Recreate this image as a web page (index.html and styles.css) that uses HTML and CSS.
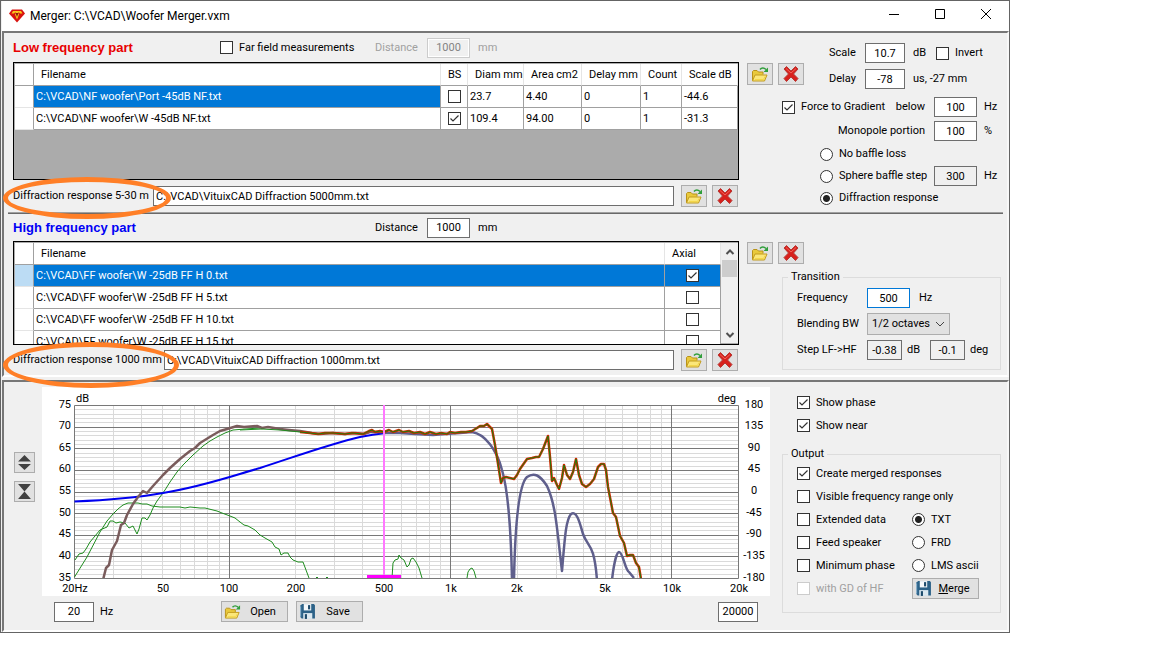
FILE: index.html
```
<!DOCTYPE html>
<html lang="en">
<head>
    <meta charset="UTF-8">
    <meta name="viewport" content="width=device-width, initial-scale=1.0">
    <title>Merger: C:\VCAD\Woofer Merger.vxm</title>
    <link rel="stylesheet" href="styles.css">
</head>
<body>
    <svg class="sprite" aria-hidden="true">
        <symbol id="icon-folder" viewBox="0 0 18 18">
            <path d="M1.500 15.500V6.500l1-1H6L7.500 7H12v2.500" fill="#e9c93c" stroke="#b8921a"/>
            <path d="M1.500 16l2.500-6h12l-2.500 6z" fill="#fbe77a" stroke="#c39c1e"/>
            <path d="M4 14.500h8.500l1.500-3" fill="none" stroke="#f3d64a"/>
            <path d="M9 4.500c1.500-2 4-2 6 0" fill="none" stroke="#2f9e3a" stroke-width="1.500"/>
            <path d="M17 2.500v4.500h-4.500z" fill="#2f9e3a"/>
        </symbol>
        <symbol id="icon-delete" viewBox="0 0 18 18">
            <path d="M4.500 1.500L9 6l4.500-4.500 2.500 2.500-4.500 5 4.500 4.500-2.500 3L9 12l-4.500 4.500L2 13.500 6.500 9 2 4z" fill="#d8201c" stroke="#b53a35"/>
            <path d="M4 3.500l5 4.500 5-4.500" fill="none" stroke="#f0655a"/>
        </symbol>
        <symbol id="icon-save" viewBox="0 0 16 16">
            <path d="M1 2.500L3 1h11l1 1v12.500H2.500L1 13z" fill="#2c6288"/>
            <path d="M4.500 1h7v6h-7z" fill="#f4f8fb"/>
            <path d="M8.500 2h2v4h-2z" fill="#1c4a6b"/>
            <path d="M4 9.500h8.500V15H4z" fill="#dbe8f0"/>
            <path d="M5.500 10.500h2V15h-2z" fill="#1c4a6b"/>
            <path d="M1.500 3v10" stroke="#8db4cd"/>
        </symbol>
    </svg>

    <div class="window">
        <header class="titlebar">
            <svg class="logo" viewBox="0 0 16 14" aria-hidden="true">
                <path d="M3 0.500h10l3 4-8 9-8-9z" fill="#d8130f"/>
                <path d="M4 2h8l1.500 2.500h-2.500l-1-1H9l1 2-2 5-2-5 1-2H6l-1 1H2.500z" fill="#f7c81c"/>
                <path d="M6.500 4h3L8 8z" fill="#8c1010"/>
            </svg>
            <h1>Merger: C:\VCAD\Woofer Merger.vxm</h1>
            <div class="caption-buttons">
                <button aria-label="Minimize"><svg viewBox="0 0 12 12"><path d="M1 6.500h10"/></svg></button>
                <button aria-label="Maximize"><svg viewBox="0 0 12 12"><path d="M1.500 1.500h9v9h-9z"/></svg></button>
                <button aria-label="Close"><svg viewBox="0 0 12 12"><path d="M1 1l10 10M11 1L1 11"/></svg></button>
            </div>
        </header>

        <main>
            <div class="panel">
                <section class="part low">
                    <div class="part-main">
                        <div class="part-head">
                            <h2 class="red">Low frequency part</h2>
                            <label class="check far-field"><input type="checkbox"> Far field measurements</label>
                            <label class="distance disabled" for="lf-distance">Distance</label>
                            <input id="lf-distance" class="field" type="text" value="1000" disabled>
                            <span class="disabled">mm</span>
                        </div>
                        <div class="grid-frame">
                            <table class="files">
                                <colgroup>
                                    <col class="c-mark"><col><col class="c-bs"><col class="c-diam"><col class="c-area"><col class="c-delay"><col class="c-count"><col class="c-scale">
                                </colgroup>
                                <thead>
                                    <tr><th></th><th>Filename</th><th>BS</th><th>Diam mm</th><th>Area cm2</th><th>Delay mm</th><th>Count</th><th>Scale dB</th></tr>
                                </thead>
                                <tbody>
                                    <tr>
                                        <td></td><td class="selected">C:\VCAD\NF woofer\Port -45dB NF.txt</td>
                                        <td class="tick"><input type="checkbox" aria-label="BS, port"></td>
                                        <td>23.7</td><td>4.40</td><td>0</td><td>1</td><td>-44.6</td>
                                    </tr>
                                    <tr>
                                        <td></td><td>C:\VCAD\NF woofer\W -45dB NF.txt</td>
                                        <td class="tick"><input type="checkbox" aria-label="BS, woofer" checked></td>
                                        <td>109.4</td><td>94.00</td><td>0</td><td>1</td><td>-31.3</td>
                                    </tr>
                                </tbody>
                            </table>
                        </div>
                        <div class="diffraction">
                            <label for="lf-diffraction">Diffraction response 5-30 m</label>
                            <input id="lf-diffraction" class="path" type="text" value="C:\VCAD\VituixCAD Diffraction 5000mm.txt">
                            <button class="tool" aria-label="Open"><svg><use href="#icon-folder"/></svg></button>
                            <button class="tool" aria-label="Remove"><svg><use href="#icon-delete"/></svg></button>
                            <span class="ring"></span>
                        </div>
                    </div>

                    <div class="side">
                        <div class="side-head">
                            <div class="tools">
                                <button class="tool" aria-label="Add file"><svg><use href="#icon-folder"/></svg></button>
                                <button class="tool" aria-label="Delete file"><svg><use href="#icon-delete"/></svg></button>
                            </div>
                            <div class="scale-rows">
                                <label for="scale">Scale</label>
                                <input id="scale" class="field small" type="text" value="10.7">
                                <div class="after"><span class="db">dB</span><label class="check"><input type="checkbox"> Invert</label></div>
                                <label for="delay">Delay</label>
                                <input id="delay" class="field small" type="text" value="-78">
                                <div class="after">us, -27 mm</div>
                            </div>
                        </div>
                        <div class="side-row">
                            <label class="check grow"><input type="checkbox" checked> Force to Gradient</label>
                            <label for="gradient">below</label>
                            <input id="gradient" class="field" type="text" value="100">
                            <span class="unit">Hz</span>
                        </div>
                        <div class="side-row">
                            <label for="monopole">Monopole portion</label>
                            <input id="monopole" class="field" type="text" value="100">
                            <span class="unit">%</span>
                        </div>
                        <div class="radios">
                            <label class="check"><input type="radio" name="baffle"> No baffle loss</label>
                            <div class="radio-row">
                                <label class="check"><input type="radio" name="baffle"> Sphere baffle step</label>
                                <input class="field" type="text" value="300" readonly aria-label="Baffle step frequency">
                                <span class="unit">Hz</span>
                            </div>
                            <label class="check"><input type="radio" name="baffle" checked> Diffraction response</label>
                        </div>
                    </div>
                </section>

                <hr class="splitter">

                <section class="part high">
                    <div class="part-main">
                        <div class="part-head">
                            <h2 class="blue">High frequency part</h2>
                            <label class="distance" for="hf-distance">Distance</label>
                            <input id="hf-distance" class="field" type="text" value="1000">
                            <span>mm</span>
                        </div>
                        <div class="grid-frame">
                            <table class="files">
                                <colgroup><col class="c-mark"><col><col class="c-axial"></colgroup>
                                <thead>
                                    <tr><th></th><th>Filename</th><th>Axial</th></tr>
                                </thead>
                                <tbody>
                                    <tr class="current">
                                        <td></td><td class="selected">C:\VCAD\FF woofer\W -25dB FF H 0.txt</td>
                                        <td class="tick selected"><input type="checkbox" aria-label="Axial, 0" checked></td>
                                    </tr>
                                    <tr>
                                        <td></td><td>C:\VCAD\FF woofer\W -25dB FF H 5.txt</td>
                                        <td class="tick"><input type="checkbox" aria-label="Axial, 5"></td>
                                    </tr>
                                    <tr>
                                        <td></td><td>C:\VCAD\FF woofer\W -25dB FF H 10.txt</td>
                                        <td class="tick"><input type="checkbox" aria-label="Axial, 10"></td>
                                    </tr>
                                    <tr>
                                        <td></td><td>C:\VCAD\FF woofer\W -25dB FF H 15.txt</td>
                                        <td class="tick"><input type="checkbox" aria-label="Axial, 15"></td>
                                    </tr>
                                </tbody>
                            </table>
                            <div class="scrollbar">
                                <button aria-label="Scroll up"><svg viewBox="0 0 10 6"><path d="M1.500 5L5 1.500 8.500 5"/></svg></button>
                                <div class="thumb"></div>
                                <button aria-label="Scroll down"><svg viewBox="0 0 10 6"><path d="M1.500 1L5 4.500 8.500 1"/></svg></button>
                            </div>
                        </div>
                        <div class="diffraction">
                            <label for="hf-diffraction">Diffraction response 1000 mm</label>
                            <input id="hf-diffraction" class="path" type="text" value="C:\VCAD\VituixCAD Diffraction 1000mm.txt">
                            <button class="tool" aria-label="Open"><svg><use href="#icon-folder"/></svg></button>
                            <button class="tool" aria-label="Remove"><svg><use href="#icon-delete"/></svg></button>
                            <span class="ring"></span>
                        </div>
                    </div>

                    <div class="side">
                        <div class="tools">
                            <button class="tool" aria-label="Add file"><svg><use href="#icon-folder"/></svg></button>
                            <button class="tool" aria-label="Delete file"><svg><use href="#icon-delete"/></svg></button>
                        </div>
                        <fieldset class="transition">
                            <legend>Transition</legend>
                            <label for="frequency">Frequency</label>
                            <div class="values"><input id="frequency" class="field active" type="text" value="500"><span class="hz">Hz</span></div>
                            <label for="blending">Blending BW</label>
                            <div class="values"><select id="blending"><option>1/2 octaves</option></select></div>
                            <label for="step-db">Step LF-&gt;HF</label>
                            <div class="values">
                                <input id="step-db" class="field tiny" type="text" value="-0.38" readonly><span>dB</span>
                                <input class="field tiny step-deg" type="text" value="-0.1" readonly aria-label="Step in degrees"><span>deg</span>
                            </div>
                        </fieldset>
                    </div>
                </section>
            </div>

            <div class="panel bottom">
                <div class="zoom-buttons">
                    <button aria-label="Expand scale"><svg viewBox="0 0 14 14"><path d="M7 0l6 6H1zM7 14l6-5.500H1z"/></svg></button>
                    <button aria-label="Compress scale"><svg viewBox="0 0 14 14"><path d="M1 0h12L7 7zM1 14h12L7 7z"/></svg></button>
                </div>

                <div class="chart-column">
                    <svg id="chart" class="chart" viewBox="42 387 728 209" role="img" aria-label="Frequency response">
                        <defs><clipPath id="plot"><rect x="74" y="405" width="665" height="173"/></clipPath></defs>
                        <g id="chart-grid"></g>
                        <g clip-path="url(#plot)" class="curves">
                            <path class="near" d="M74.500 577L87 557 100 532 107 521 113 514 118 509 123 505 128 503 133 503 138 503 142 504 147 504 152 506 160 507 170 507 180 507 185 508 190 507 200 508 205 508 213 510 217 511 222 513 230 516 235 518 240 522 244 525 248 526 255 530 258 533 260 535 265 538 272 542 275 547 279 549 281 555 284 553 288 553 290 557 293 560 298 562 303 562 306 570 309 578M316 578l1-1 1 1M326 578l1-1 1 1"/>
                            <path class="near" d="M75 560L79 554 83 553 86 549 90 542 95 536 100 530 107 527 110 521 113 521 116 523 120 522 125 523 129 528 133 526 137 534 139 529 142 518 145 518 147 520 150 515 153 508 157 501 160 497 165 490 170 482 177 472 183 465 193 455 203 446 210 441 217 437 225 433 233 430 245 429 260 428"/>
                            <path class="near" d="M392 578l1-15 2-3 3-1 1-4 2 3 3 2 3 7 2-2 2-6 2-1 3 4 3 6 3 10M467 578l1-6 2-3 2-1 2 3 2 7"/>
                            <path class="blue-line" d="M74.500 501.500C110 500 140 497 163 493C205 486 235 475 260 468C300 455 330 444 360 437C370 435 377 434 386 433"/>
                            <path class="slate" d="M383 433L400 433 415 434 433 435 445 434 460 433 472 432C485 434 497 450 502 470C508 490 511 530 512 580H514C515 530 518 485 527 477C534 472 540 475 547 486C556 505 557 530 562 571C565 535 566 520 571 514C577 510 580 524 583 534C588 548 594 542 597 580M612 580C614 562 617 552 619 552C623 552 625 570 629 572L634 578"/>
                            <path class="lf" d="M103 580L106 568 109 565 112 550 117 541 121 525 124 523 127 515 133 504 138 497 143 491 147 493 153 486 163 475 170 468 180 459 190 451 195 448 200 443 213 435 220 431 227 429 237 426 244 427 257 426 262 428 268 427 280 429 289 430 300 431 312 433 320 434 333 433 345 434 355 433 364 434 370 432 375 432 383 432"/>
                            <g class="hf">
                                <path id="hf-curve" d="M300 432L310 433 318 434 325 433 333 433 345 434 352 433 363 434 369 431 372 430 375 432 380 431 384 432 389 430 393 432 399 430 403 432 409 431 414 433 420 432 425 434 430 432 436 434 441 433 447 434 450 432 455 433 461 432 466 432 472 431 477 428 480 426 484 426 487 424 489 426 492 429 495 445 499 470 501 483 503 478 506 477 514 479 517 475 520 469 527 459 532 458 536 457 539 457 543 449 548 436 550 457 552 481 554 478 557 485 559 489 562 478 564 465 567 475 570 479 573 472 576 459 579 475 582 484 586 487 590 484 594 479 598 467 601 464 604 464 606 470 608 487 613 513 616 517 620 536 624 543 627 556 630 555 633 555 636 563 639 567 641 579"/>
                            </g>
                            <path class="near" d="M240 430L262 429 280 430 300 432"/>
                        </g>
                        <path class="cursor" d="M384 405v173"/>
                        <path class="blend" d="M367 576.500h34"/>
                        <g id="chart-labels"></g>
                    </svg>
                    <div class="chart-tools">
                        <div class="range"><input class="field small" type="text" value="20" aria-label="Minimum frequency"><span>Hz</span></div>
                        <button class="command"><svg><use href="#icon-folder"/></svg><span>Open</span></button>
                        <button class="command"><svg><use href="#icon-save"/></svg><span>Save</span></button>
                        <input class="field small range-max" type="text" value="20000" aria-label="Maximum frequency">
                    </div>
                </div>

                <div class="options">
                    <div class="show">
                        <label class="check"><input type="checkbox" checked> Show phase</label>
                        <label class="check"><input type="checkbox" checked> Show near</label>
                    </div>
                    <fieldset class="output">
                        <legend>Output</legend>
                        <label class="check wide"><input type="checkbox" checked> Create merged responses</label>
                        <label class="check wide"><input type="checkbox"> Visible frequency range only</label>
                        <label class="check"><input type="checkbox"> Extended data</label>
                        <label class="check"><input type="radio" name="format" checked> TXT</label>
                        <label class="check"><input type="checkbox"> Feed speaker</label>
                        <label class="check"><input type="radio" name="format"> FRD</label>
                        <label class="check"><input type="checkbox"> Minimum phase</label>
                        <label class="check"><input type="radio" name="format"> LMS ascii</label>
                        <label class="check disabled"><input type="checkbox" disabled> with GD of HF</label>
                        <button class="command"><svg><use href="#icon-save"/></svg><span><u>M</u>erge</span></button>
                    </fieldset>
                </div>
            </div>
        </main>
    </div>

    <script>
        const NS = 'http://www.w3.org/2000/svg';
        const plot = { left: 74.5, right: 738.5, top: 405.5, bottom: 578.5 };
        const grid = document.getElementById('chart-grid');
        const labels = document.getElementById('chart-labels');

        function freqX(f) {
            return plot.left + Math.log10(f / 20) / 3 * (plot.right - plot.left);
        }

        function levelY(db) {
            return plot.bottom - (db - 35) / 40 * (plot.bottom - plot.top);
        }

        function snap(v) {
            return Math.floor(v) + 0.5;
        }

        function addLine(className, d) {
            const path = document.createElementNS(NS, 'path');
            path.setAttribute('class', className);
            path.setAttribute('d', d);
            grid.appendChild(path);
        }

        function addLabel(text, x, y, anchor) {
            const label = document.createElementNS(NS, 'text');
            label.setAttribute('x', x);
            label.setAttribute('y', y);
            label.setAttribute('text-anchor', anchor);
            label.textContent = text;
            labels.appendChild(label);
        }

        let minor = '';
        let major = '';
        for (let db = 35; db <= 75; db++) {
            const line = `M${plot.left} ${snap(levelY(db))}H${plot.right}`;
            if (db % 5 === 0) major += line; else minor += line;
        }
        for (let decade = 10; decade <= 10000; decade *= 10) {
            for (let n = 1; n < 10; n++) {
                const f = n * decade;
                if (f < 20 || f > 20000) continue;
                const line = `M${snap(freqX(f))} ${plot.top}V${plot.bottom}`;
                if (n === 1 || f === 20 || f === 20000) major += line; else minor += line;
            }
        }
        addLine('minor', minor);
        addLine('major', major);

        for (let i = 0; i <= 8; i++) {
            const y = Math.round(levelY(75 - i * 5)) + 2;
            addLabel(75 - i * 5, 71, y, 'end');
            addLabel(180 - i * 45, 754, y, 'middle');
        }
        addLabel('dB', 76, 402, 'start');
        addLabel('deg', 736, 402, 'end');
        [[20, '20Hz'], [50, '50'], [100, '100'], [200, '200'], [500, '500'], [1000, '1k'], [2000, '2k'], [5000, '5k'], [10000, '10k'], [20000, '20k']]
            .forEach(([f, text]) => addLabel(text, Math.round(freqX(f)), 592, 'middle'));

        // thin green trace on top of the wide red one
        const near = document.getElementById('hf-curve').cloneNode();
        near.removeAttribute('id');
        near.setAttribute('class', 'hf-near');
        document.querySelector('.hf').appendChild(near);
    </script>
</body>
</html>
```
FILE: styles.css
```
* {
    box-sizing: border-box;
}

body {
    margin: 0;
    background: #fff;
    color: #000;
    font-family: Roboto, "Liberation Sans", sans-serif;
    font-size: 11px;
    line-height: 14px;
}

.sprite {
    display: none;
}

.window {
    margin-right: 142px;
    padding-left: 1px;
    border: 1px solid #646464;
    background: #f0f0f0;
}

button, input, select {
    font: inherit;
    color: inherit;
    margin: 0;
}

/* title bar */
.titlebar {
    display: flex;
    align-items: center;
    height: 30px;
    padding-left: 7px;
    background: #fff;
}

.logo {
    width: 16px;
    height: 14px;
    margin-right: 5px;
}

.titlebar h1 {
    flex: 1;
    margin: 0;
    font-size: 12px;
    font-weight: normal;
}

.caption-buttons {
    display: flex;
}

.caption-buttons button {
    width: 46px;
    height: 30px;
    padding: 0;
    border: none;
    background: none;
}

.caption-buttons svg {
    width: 12px;
    height: 12px;
    fill: none;
    stroke: #000;
}

/* panels */
.panel {
    border: 2px solid;
    border-color: #777 #f8f8f8 #fff #777;
    margin-bottom: 3px;
}

.part {
    display: grid;
    grid-template-columns: minmax(0, 1fr) 254px;
    column-gap: 8px;
    padding: 0 6px 0 9px;
}

.splitter {
    height: 2px;
    margin: 0 4px;
    border: none;
    border-top: 1px solid #a0a0a0;
    background: #696969;
}

.part-head {
    display: flex;
    align-items: center;
    height: 29px;
}

.high .part-head {
    height: 27px;
}

.part-head h2 {
    width: 207px;
    margin: 0;
    font-family: "Liberation Sans", Arial, sans-serif;
    font-size: 13px;
    line-height: 16px;
}

.red {
    color: #e80000;
}

.blue {
    color: #0000f5;
}

.far-field {
    width: 155px;
}

.high .distance {
    margin-left: 155px;
}

.distance {
    width: 52px;
}

.part-head .field {
    margin-right: 8px;
}

.disabled {
    color: #a0a0a0;
}

/* controls */
.field {
    width: 43px;
    height: 20px;
    padding: 0 2px;
    border: 1px solid #6e6e6e;
    border-radius: 0;
    background: #fff;
    text-align: center;
}

.field.small {
    width: 40px;
}

.field.tiny {
    width: 35px;
}

.field:read-only {
    background: #f0f0f0;
}

.field:disabled {
    border-color: #ccc;
    background: #f0f0f0;
    box-shadow: inset 0 0 0 1px #fff;
    color: #838383;
}

.field.active {
    border-color: #0078d7;
}

.check {
    display: flex;
    align-items: center;
    gap: 6px;
    white-space: nowrap;
}

input[type="checkbox"],
input[type="radio"] {
    appearance: none;
    flex: none;
    width: 13px;
    height: 13px;
    border: 1px solid #333;
    background: #fff center no-repeat;
}

input[type="radio"] {
    border-radius: 50%;
}

input[type="checkbox"]:checked {
    background-image: url("data:image/svg+xml,%3Csvg xmlns='http://www.w3.org/2000/svg' width='11' height='11'%3E%3Cpath d='M1.5 5.500L4 8l5.500-5.500' fill='none' stroke='%23333' stroke-width='1.200'/%3E%3C/svg%3E");
}

input[type="radio"]:checked {
    background-image: radial-gradient(circle, #222 3px, #fff 4px);
}

input[type="checkbox"]:disabled {
    border-color: #ccc;
}

.tool {
    display: flex;
    align-items: center;
    justify-content: center;
    flex: none;
    width: 26px;
    height: 22px;
    padding: 0;
    border: 1px solid #adadad;
    background: #e1e1e1;
}

.tool svg {
    width: 18px;
    height: 18px;
}

.command {
    display: flex;
    align-items: center;
    width: 67px;
    height: 21px;
    padding: 0 2px;
    border: 1px solid #adadad;
    background: #e1e1e1;
}

.command svg {
    flex: none;
    width: 17px;
    height: 17px;
}

.command span {
    flex: 1;
    text-align: center;
}

/* file tables */
.grid-frame {
    display: flex;
    align-items: flex-start;
    height: 118px;
    border: 1px solid #000;
    padding: 1px 0 1px 1px;
    background: #ababab;
    overflow: hidden;
}

.high .grid-frame {
    height: 104px;
}

.files {
    flex: 1;
    width: 100%;
    table-layout: fixed;
    border-spacing: 0;
    background: #fff;
}

.files th,
.files td {
    height: 22px;
    padding: 0 2px;
    border-right: 1px solid #a0a0a0;
    border-bottom: 1px solid #a0a0a0;
    font-weight: normal;
    text-align: left;
    white-space: nowrap;
}

.files th {
    padding-left: 7px;
    padding-right: 0;
    border-right-color: #e5e5e5;
}

.files th:first-child {
    border-right-color: #a0a0a0;
}

.files td:first-child {
    border-bottom-color: #e5e5e5;
}

.files .selected {
    background: #0078d7;
    color: #fff;
}

.current td:first-child {
    background: #bcdcf4;
}

.files .tick {
    padding: 0;
    text-align: center;
}

.tick input {
    vertical-align: middle;
    color: #000;
}

.c-mark {
    width: 19px;
}

.c-bs {
    width: 27px;
}

.c-diam,
.c-scale,
.c-axial {
    width: 56px;
}

.c-area {
    width: 58px;
}

.c-delay {
    width: 59px;
}

.c-count {
    width: 41px;
}

.scrollbar {
    display: flex;
    flex-direction: column;
    flex: none;
    width: 17px;
    height: 100%;
    background: #f0f0f0;
}

.scrollbar button {
    height: 17px;
    padding: 0;
    border: none;
    background: none;
    line-height: 10px;
}

.scrollbar button:last-child {
    margin-top: auto;
}

.scrollbar svg {
    width: 10px;
    height: 6px;
    fill: none;
    stroke: #505050;
    stroke-width: 2;
}

.thumb {
    height: 17px;
    margin: 0 1px;
    background: #cdcdcd;
}

/* diffraction file rows */
.diffraction {
    display: flex;
    align-items: center;
    position: relative;
    height: 32px;
    padding-right: 1px;
}

.high .diffraction {
    height: 30px;
}

.diffraction label {
    width: 140px;
}

.high .diffraction label {
    width: 151px;
}

.path {
    flex: 1;
    min-width: 0;
    height: 20px;
    margin-right: 7px;
    padding: 0 2px;
    border: 1px solid #6e6e6e;
    background: #fff;
}

.diffraction .tool + .tool {
    margin-left: 5px;
}

.ring {
    position: absolute;
    top: -3px;
    left: -10px;
    width: 168px;
    height: 42px;
    border: 5px solid #ff7f27;
    border-radius: 50%;
    pointer-events: none;
}

.high .ring {
    width: 176px;
    height: 46px;
}

/* right hand settings */
.side-head {
    display: flex;
    gap: 25px;
    padding-top: 7px;
}

.tools {
    display: flex;
    gap: 5px;
}

.side-head .tools {
    padding-top: 23px;
}

.high .side > .tools {
    padding-top: 28px;
}

.scale-rows {
    display: grid;
    grid-template-columns: 36px 40px 1fr;
    grid-auto-rows: 26px;
    align-items: center;
}

.after {
    display: flex;
    padding-left: 8px;
    white-space: nowrap;
}

.db {
    width: 23px;
}

.side-row {
    display: flex;
    align-items: center;
    justify-content: flex-end;
    height: 24px;
    padding-left: 35px;
}

.side-head + .side-row {
    margin-top: 3px;
}

.grow {
    margin-right: auto;
}

.side-row .field {
    margin-left: 9px;
}

.unit {
    width: 17px;
    margin-left: 7px;
}

.radios {
    display: grid;
    grid-auto-rows: 22px;
    padding-left: 73px;
}

.radio-row {
    display: flex;
    align-items: center;
    justify-content: space-between;
}

.radio-row .field {
    margin-left: auto;
}

/* group boxes */
fieldset {
    display: grid;
    align-items: center;
    min-width: 0;
    margin: 0;
    border: 1px solid #dcdcdc;
}

legend {
    padding: 0 3px;
    margin-left: -9px;
}

.transition {
    grid-template-columns: 70px 1fr;
    grid-auto-rows: 26px;
    margin: 6px 0 0 35px;
    padding: 1px 0 6px 14px;
}

.values {
    display: flex;
    align-items: center;
    gap: 5px;
}

.hz {
    margin-left: 4px;
}

.step-deg {
    margin-left: 5px;
}

select {
    appearance: none;
    width: 83px;
    height: 22px;
    padding: 0 4px;
    border: 1px solid #adadad;
    border-radius: 0;
    background: #e1e1e1 right 4px center no-repeat;
    background-image: url("data:image/svg+xml,%3Csvg xmlns='http://www.w3.org/2000/svg' width='10' height='6'%3E%3Cpath d='M1 1l4 4 4-4' fill='none' stroke='%23444'/%3E%3C/svg%3E");
}

/* chart panel */
.bottom {
    display: grid;
    grid-template-columns: 38px minmax(0, 1fr) 219px;
    margin-bottom: 0;
    padding: 5px 6px 8px 0;
}

.zoom-buttons {
    display: flex;
    flex-direction: column;
    gap: 8px;
    padding: 65px 0 0 10px;
}

.zoom-buttons button {
    display: flex;
    align-items: center;
    justify-content: center;
    width: 21px;
    height: 21px;
    padding: 0;
    border: 1px solid #adadad;
    background: #e1e1e1;
}

.zoom-buttons svg {
    width: 15px;
    height: 15px;
    fill: #404040;
}

.chart-column {
    margin-right: 12px;
}

.chart {
    display: block;
    width: 100%;
    background: #fff;
}

.chart text {
    font-size: 11px;
}

.chart path {
    fill: none;
}

.minor {
    stroke: #dadada;
}

.major {
    stroke: #787878;
}

.curves {
    stroke-linejoin: round;
}

.near {
    stroke: #1e8c1e;
}

.blue-line {
    stroke: #0000f0;
    stroke-width: 2;
}

.slate {
    stroke: #5f5f8c;
    stroke-width: 2.5;
}

.lf {
    stroke: #7a5c5c;
    stroke-width: 2.5;
}

.hf path {
    stroke: #d22800;
    stroke-width: 2.5;
}

.hf .hf-near {
    stroke: #1e7d0a;
    stroke-width: 1;
}

.cursor {
    stroke: #ff78ff;
    stroke-width: 2;
}

.blend {
    stroke: #ff00ff;
    stroke-width: 3;
}

.chart-tools {
    display: flex;
    align-items: center;
    gap: 8px;
    padding: 5px 12px 0;
}

.range {
    display: flex;
    align-items: center;
    gap: 6px;
    width: 159px;
}

.range-max {
    margin-left: auto;
}

.show {
    display: grid;
    grid-auto-rows: 23px;
    padding: 4px 0 10px 15px;
}

.output {
    grid-template-columns: 115px 1fr;
    grid-auto-rows: 23px;
    padding: 1px 0 12px 14px;
}

.output .wide {
    grid-column: 1 / 3;
}
```
